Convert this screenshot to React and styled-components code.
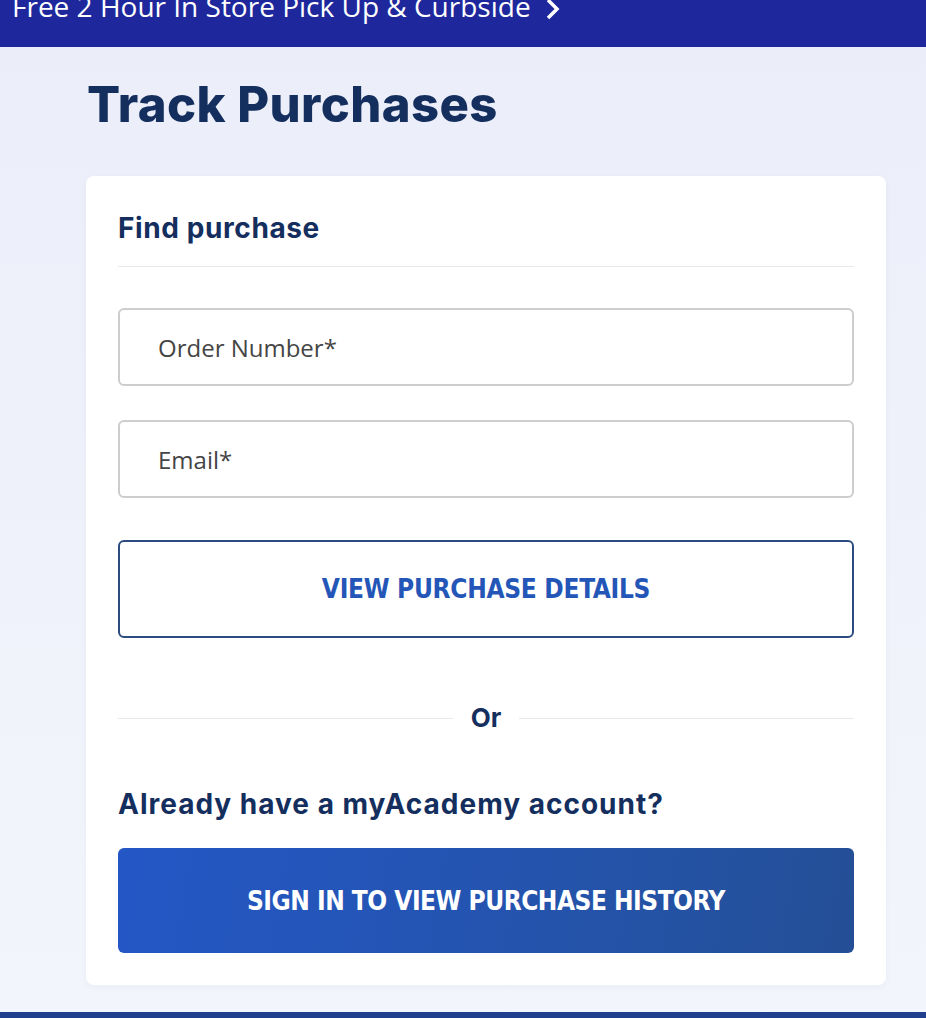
import styled, { createGlobalStyle } from "styled-components";

const GlobalStyle = createGlobalStyle`
    html, body {
        margin: 0;
        padding: 0;
        background: #eef1fa;
    }
    * {
        box-sizing: border-box;
    }
`;

const Page = styled.div`
    display: flex;
    flex-direction: column;
    width: 926px;
    height: 1018px;
    overflow: hidden;
    background: linear-gradient(180deg, #ebeef9 0%, #f3f5fc 100%);
`;

const PromoBar = styled.div`
    display: flex;
    align-items: flex-end;
    gap: 14px;
    height: 47px;
    flex-shrink: 0;
    padding: 0 0 27px 12px;
    background: #1e289c;
    color: #ffffff;
    font-family: "Open Sans", sans-serif;
    font-size: 28px;
    line-height: 1;
    overflow: hidden;
`;

const Main = styled.div`
    display: flex;
    flex-direction: column;
    flex: 1;
    padding: 0 40px 0 86px;
`;

const Title = styled.h1`
    display: flex;
    align-items: center;
    height: 55px;
    margin: 31px 0 43px 1px;
    font-family: "Inter", sans-serif;
    font-weight: 800;
    font-size: 49px;
    line-height: 1.2;
    letter-spacing: 0.4px;
    color: #142e5e;
`;

const Card = styled.div`
    display: flex;
    flex-direction: column;
    background: #ffffff;
    border-radius: 8px;
    padding: 34px 32px 32px 32px;
    box-shadow: 0 2px 6px rgba(20, 40, 100, 0.04);
`;

const SectionTitle = styled.h2`
    margin: 0;
    font-family: "Inter", sans-serif;
    font-weight: 700;
    font-size: 28px;
    line-height: 36px;
    color: #142e5e;
    letter-spacing: 0.6px;
`;

const Rule = styled.hr`
    border: 0;
    border-top: 1px solid #e6e8ec;
    margin: 20px 0 41px 0;
`;

const Field = styled.input`
    height: 78px;
    width: 100%;
    margin-bottom: ${(p) => p.$gap}px;
    border: 2px solid #cdcdcf;
    border-radius: 6px;
    padding: 0 38px;
    font-family: "Open Sans", sans-serif;
    font-size: 24px;
    color: #444444;
    outline: none;

    &::placeholder {
        color: #454545;
    }
`;

const OutlineButton = styled.button`
    height: 98px;
    width: 100%;
    border: 2px solid #2c4b7e;
    border-radius: 6px;
    background: #ffffff;
    color: #2456b8;
    font-family: "DejaVu Sans Condensed", "DejaVu Sans", sans-serif;
    font-weight: 700;
    font-size: 26px;
    letter-spacing: -0.3px;
    cursor: pointer;
`;

const OrRow = styled.div`
    display: flex;
    align-items: center;
    gap: 18px;
    margin: 62px 0 48px 0;
`;

const OrLine = styled.div`
    flex: 1;
    border-top: 1px solid #e6e8ec;
`;

const OrText = styled.span`
    font-family: "Inter", sans-serif;
    font-weight: 700;
    font-size: 26px;
    line-height: 36px;
    color: #142e5e;
`;

const Question = styled.p`
    margin: 0 0 24px 0;
    font-family: "Inter", sans-serif;
    font-weight: 700;
    font-size: 28px;
    line-height: 40px;
    color: #142e5e;
    letter-spacing: 1px;
`;

const PrimaryButton = styled.button`
    height: 105px;
    width: 100%;
    border: 0;
    border-radius: 6px;
    background: linear-gradient(100deg, #2457c6 0%, #2454b0 50%, #244f96 100%);
    color: #ffffff;
    font-family: "DejaVu Sans Condensed", "DejaVu Sans", sans-serif;
    font-weight: 700;
    font-size: 26px;
    letter-spacing: -0.5px;
    cursor: pointer;
`;

const FooterBar = styled.div`
    height: 6px;
    margin-top: auto;
    flex-shrink: 0;
    background: #213f8f;
`;

function App() {
    return (
        <Page>
            <GlobalStyle />
            <PromoBar>
                <span>Free 2 Hour In Store Pick Up &amp; Curbside</span>
                <svg width="16" height="22" viewBox="0 0 16 22" fill="none">
                    <path d="M3 2 L12 11 L3 20" stroke="#fff" strokeWidth="3.5" />
                </svg>
            </PromoBar>
            <Main>
                <Title>Track Purchases</Title>
                <Card>
                    <SectionTitle>Find purchase</SectionTitle>
                    <Rule />
                    <Field placeholder="Order Number*" $gap={34} />
                    <Field placeholder="Email*" $gap={42} />
                    <OutlineButton>VIEW PURCHASE DETAILS</OutlineButton>
                    <OrRow>
                        <OrLine />
                        <OrText>Or</OrText>
                        <OrLine />
                    </OrRow>
                    <Question>Already have a myAcademy account?</Question>
                    <PrimaryButton>SIGN IN TO VIEW PURCHASE HISTORY</PrimaryButton>
                </Card>
            </Main>
            <FooterBar />
        </Page>
    );
}

export default App;
